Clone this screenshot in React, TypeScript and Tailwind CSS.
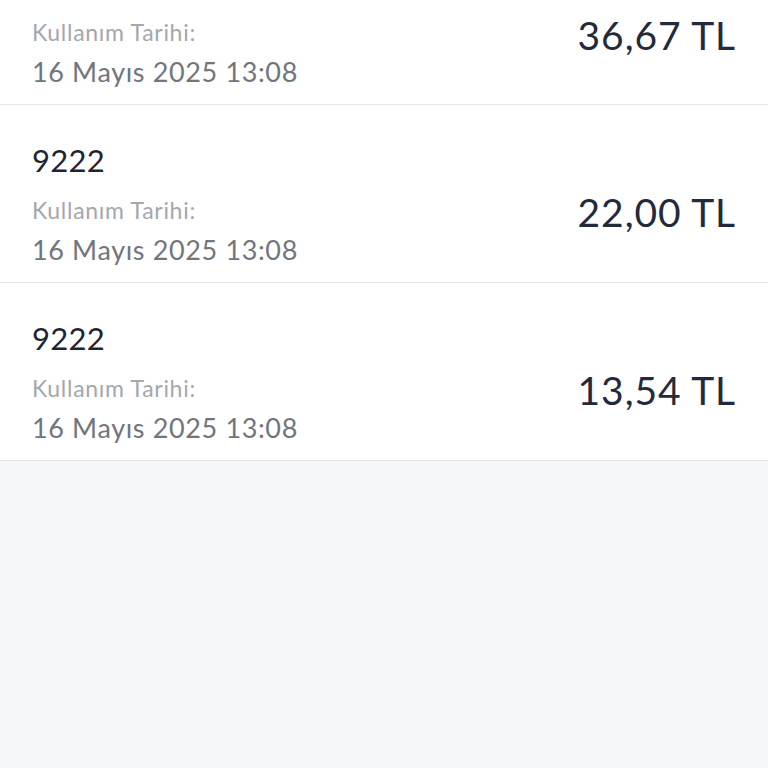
const items = [
  { code: '', date: '16 Mayıs 2025 13:08', amount: '36,67 TL' },
  { code: '9222', date: '16 Mayıs 2025 13:08', amount: '22,00 TL' },
  { code: '9222', date: '16 Mayıs 2025 13:08', amount: '13,54 TL' },
];

// first row is scrolled partly out of view, only its lower half shows
function UsageRow({ code, date, amount }: { code: string; date: string; amount: string }) {
  const cut = !code;
  return (
    <div
      className={
        'bg-white border-b border-[#e3e5e8] flex justify-between px-8 ' +
        (cut ? 'h-[105px]' : 'h-[178px]')
      }
    >
      <div className={'flex flex-col ' + (cut ? 'pt-[14px]' : 'pt-[35px]')}>
        {!cut && <span className="text-[31px] leading-[40px] text-[#1f2433] tracking-[0.3px]">{code}</span>}
        <span
          className={
            'text-[23px] leading-[36px] text-[#a3a7ae] tracking-[0.7px] ' + (cut ? '' : 'mt-[12px]')
          }
        >
          Kullanım Tarihi:
        </span>
        <span className="mt-[4px] text-[27px] leading-[36px] text-[#71767e] tracking-[0.63px]">{date}</span>
      </div>
      <div
        className={
          'text-[39px] leading-[48px] text-[#232a3b] tracking-[0.9px] ' + (cut ? 'mt-[11px]' : 'mt-[83px]')
        }
      >
        {amount}
      </div>
    </div>
  );
}

export default function App() {
  return (
    <div
      className="h-[768px] w-full overflow-hidden bg-[#f6f7f9]"
      style={{ fontFamily: 'Lato, "Noto Sans", sans-serif' }}
    >
      {items.map((it, i) => (
        <UsageRow key={i} {...it} />
      ))}
    </div>
  );
}
